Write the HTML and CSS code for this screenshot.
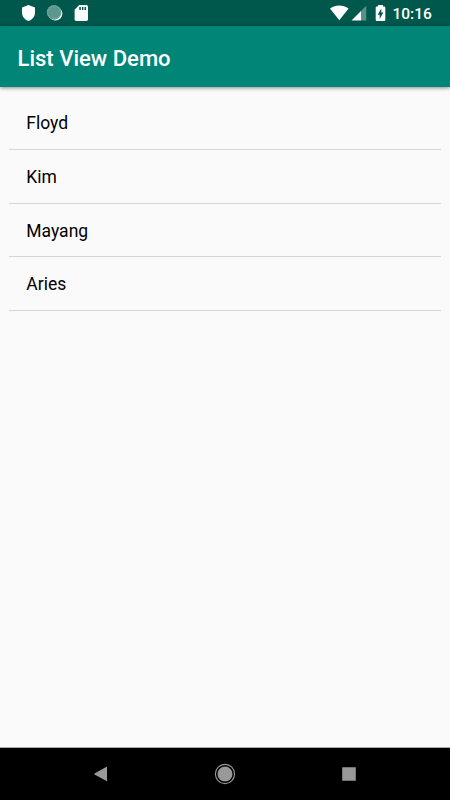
FILE: index.html
```html
<!DOCTYPE html>
<html lang="en">
<head>
<meta charset="utf-8">
<title>List View Demo</title>
<link rel="stylesheet" href="styles.css">
</head>
<body>
<div class="screen">
  <div class="status-bar">
    <svg class="status-left" width="110" height="26" viewBox="0 0 110 26">
      <path fill="#fff" d="M28.5 5 L35 7.6 V12.5 C35 16.5 32.3 19.8 28.5 21 C24.7 19.8 22 16.5 22 12.5 V7.6 Z"/>
      <circle cx="55.4" cy="13.6" r="7" fill="#fff"/>
      <circle cx="54.1" cy="12.4" r="7.3" fill="#5b978c"/>
      <circle cx="54.1" cy="12.4" r="6.4" fill="none" stroke="#82b0a8" stroke-width="1.2" stroke-dasharray="1 1"/>
      <path fill="#fff" d="M79.3 5 H86.3 Q88 5 88 6.7 V19.3 Q88 21 86.3 21 H76.3 Q74.6 21 74.6 19.3 V9.8 Z"/>
      <path fill="#00574b" d="M79.3 7 H80.8 V10 H79.3 Z M81.9 7 H83.4 V10 H81.9 Z M84.5 7 H86 V10 H84.5 Z"/>
    </svg>
    <div class="status-right">
      <svg width="60" height="26" viewBox="0 0 60 26">
        <path fill="#fff" d="M0 8.5 C5.5 4.4 13 4.4 18.6 8.5 L9.3 20.3 Z"/>
        <path fill="#fff" d="M21.5 20.5 L31 11 V20.5 Z"/>
        <path fill="#56928a" d="M31 11 L36.3 5.7 V20.5 H31 Z"/>
        <path fill="#fff" d="M48 5 H53 V6.5 H54.2 Q55.3 6.5 55.3 7.6 V19.8 Q55.3 21 54.2 21 H46.8 Q45.7 21 45.7 19.8 V7.6 Q45.7 6.5 46.8 6.5 H48 Z"/>
        <path fill="#00574b" d="M51.3 8.4 V12.5 H53.3 L49.7 19 V14.8 H47.7 Z"/>
      </svg>
      <span class="time">10:16</span>
    </div>
  </div>
  <div class="app-bar">
    <h1>List View Demo</h1>
  </div>
  <ul class="list">
    <li>Floyd</li>
    <li>Kim</li>
    <li>Mayang</li>
    <li>Aries</li>
  </ul>
  <div class="nav-bar">
    <svg width="14" height="16" viewBox="0 0 14 16">
      <path fill="#999" d="M13 0.5 V15.2 L0.5 8.4 Q0 7.9 0.5 7.4 Z"/>
    </svg>
    <svg width="22" height="22" viewBox="0 0 22 22">
      <circle cx="11" cy="11" r="9.6" fill="none" stroke="#999" stroke-width="1.1"/>
      <circle cx="11" cy="11" r="7.5" fill="#999"/>
    </svg>
    <svg width="14" height="14" viewBox="0 0 14 14">
      <rect x="0.2" y="0.2" width="13.6" height="13.6" rx="0.3" fill="#999"/>
    </svg>
  </div>
</div>
</body>
</html>
```

FILE: styles.css
```css
body {
  font-family: Roboto, sans-serif;
  margin: 0;
  padding: 0;
}

.screen {
  display: flex;
  flex-direction: column;
  height: 800px;
  width: 450px;
  overflow: hidden;
  background-color: #fafafa;
}

.status-bar {
  display: flex;
  justify-content: space-between;
  height: 26px;
  background-color: #00574b;
}

.status-right {
  display: flex;
  padding-right: 17.5px;
}

.time {
  width: 40px;
  margin-left: 3px;
  color: white;
  font-size: 15.5px;
  font-weight: 500;
  line-height: 29px;
}

.app-bar {
  display: flex;
  align-items: center;
  height: 61px;
  padding-left: 17.5px;
  background-color: #008577;
  box-shadow: 0 1px 4px rgba(0, 0, 0, 0.45);
}

.app-bar h1 {
  margin: 3px 0 0;
  color: white;
  font-size: 22.05px;
  font-weight: 500;
}

.list {
  flex: 1;
  margin: 0;
  padding: 9px 9px 0;
  list-style: none;
}

.list li {
  box-sizing: border-box;
  height: 53.8px;
  padding-left: 17.3px;
  border-bottom: 1px solid #d5d5d5;
  color: black;
  font-size: 17.5px;
  line-height: 55px;
}

.nav-bar {
  display: flex;
  align-items: center;
  justify-content: space-between;
  height: 52px;
  padding: 0 94px;
  border-top: 1px solid #aaa;
  background-color: black;
}
```
